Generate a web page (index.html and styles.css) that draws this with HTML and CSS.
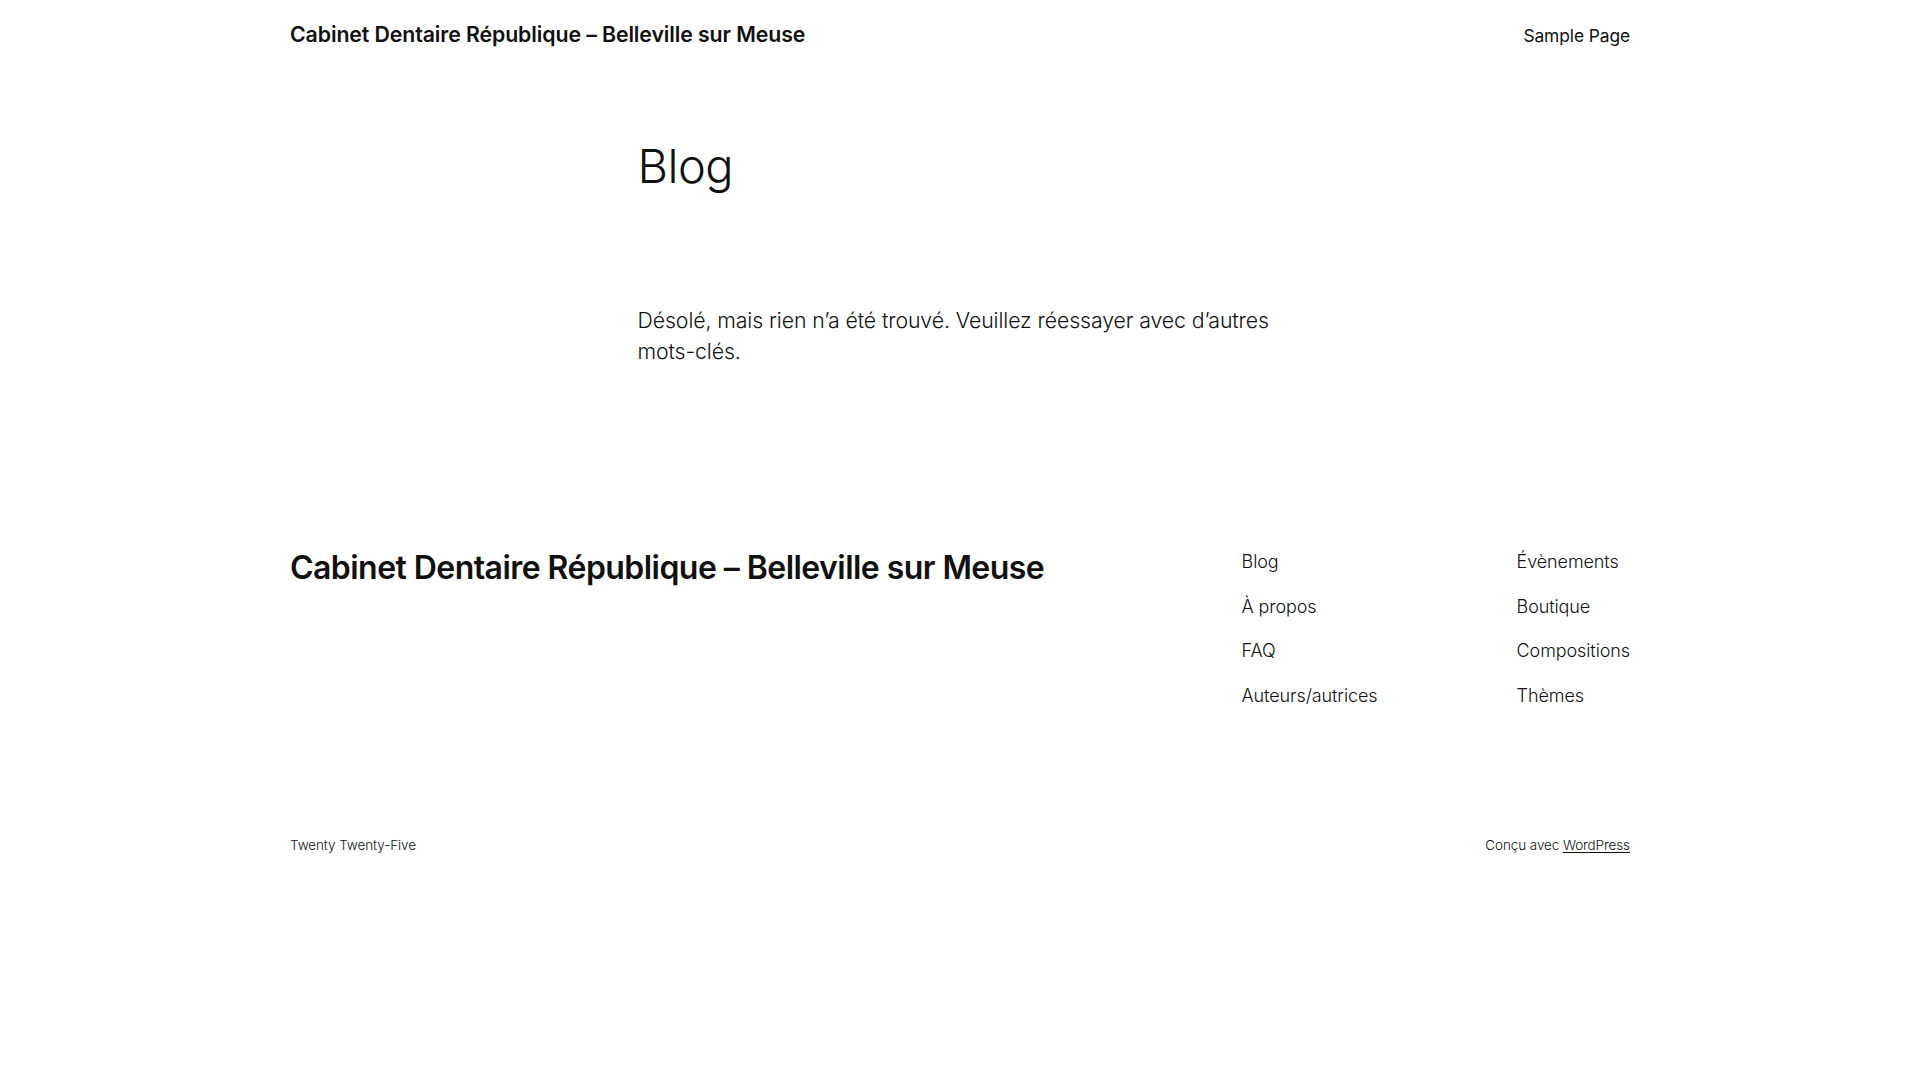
FILE: index.html
```html
<!DOCTYPE html>
<html lang="fr">
<head>
<meta charset="utf-8">
<title>Blog – Cabinet Dentaire République – Belleville sur Meuse</title>
<link rel="stylesheet" href="styles.css">
</head>
<body>
<header class="site-header">
  <a class="site-title" href="#">Cabinet Dentaire République – Belleville sur Meuse</a>
  <nav class="main-nav"><a href="#">Sample Page</a></nav>
</header>
<main class="site-main">
  <h1 class="page-title">Blog</h1>
  <p class="no-results">Désolé, mais rien n’a été trouvé. Veuillez réessayer avec d’autres mots-clés.</p>
</main>
<footer class="site-footer">
  <div class="footer-top">
    <a class="footer-title" href="#">Cabinet Dentaire République – Belleville sur Meuse</a>
    <div class="footer-navs">
      <ul class="footer-nav">
        <li><a href="#">Blog</a></li>
        <li><a href="#">À propos</a></li>
        <li><a href="#">FAQ</a></li>
        <li><a href="#">Auteurs/autrices</a></li>
      </ul>
      <ul class="footer-nav">
        <li><a href="#">Évènements</a></li>
        <li><a href="#">Boutique</a></li>
        <li><a href="#">Compositions</a></li>
        <li><a href="#">Thèmes</a></li>
      </ul>
    </div>
  </div>
  <div class="footer-bottom">
    <p class="theme-name">Twenty Twenty-Five</p>
    <p class="credits">Conçu avec <a href="#">WordPress</a></p>
  </div>
</footer>
</body>
</html>
```
FILE: styles.css
```css
* { box-sizing: border-box; }
html, body { margin: 0; padding: 0; background: #ffffff; }
body {
  font-family: "Inter", "Noto Sans", sans-serif;
  color: #111111;
  font-weight: 300;
  font-size: 20px;
  line-height: 1.4;
  letter-spacing: -0.1px;
}
a { color: inherit; text-decoration: none; }
ul { list-style: none; margin: 0; padding: 0; }
p { margin: 0; }

.site-header {
  width: 1340px;
  margin: 0 auto;
  height: 70px;
  display: flex;
  align-items: center;
  justify-content: space-between;
}
.site-title {
  font-size: 21.3px;
  font-weight: 600;
  letter-spacing: -0.1px;
}
.main-nav a {
  font-size: 17.4px;
  font-weight: 400;
}

.site-main {
  width: 645px;
  margin: 0 auto;
  padding-top: 70px;
}
.page-title {
  margin: 0;
  font-size: 47px;
  font-weight: 300;
  line-height: 1.125;
  letter-spacing: -0.5px;
}
.no-results {
  margin-top: 112px;
  font-size: 21.3px;
  line-height: 31px;
  letter-spacing: -0.1px;
}

.site-footer {
  width: 1340px;
  margin: 0 auto;
  padding-top: 182.5px;
}
.footer-top {
  display: flex;
  justify-content: space-between;
  align-items: flex-start;
}
.footer-title {
  font-size: 32px;
  font-weight: 600;
  line-height: 38px;
  letter-spacing: -0.55px;
}
.footer-navs {
  display: flex;
}
.footer-nav {
  display: flex;
  flex-direction: column;
  gap: 19.5px;
  width: 275px;
}
.footer-nav:last-child { width: auto; }
.footer-nav li {
  font-size: 18px;
  line-height: 25px;
  font-weight: 300;
}
.footer-bottom {
  display: flex;
  justify-content: space-between;
  align-items: center;
  margin-top: 127.2px;
  font-size: 13.5px;
  line-height: 20px;
  font-weight: 300;
}
.credits a { text-decoration: underline; text-underline-offset: 2px; }
```
